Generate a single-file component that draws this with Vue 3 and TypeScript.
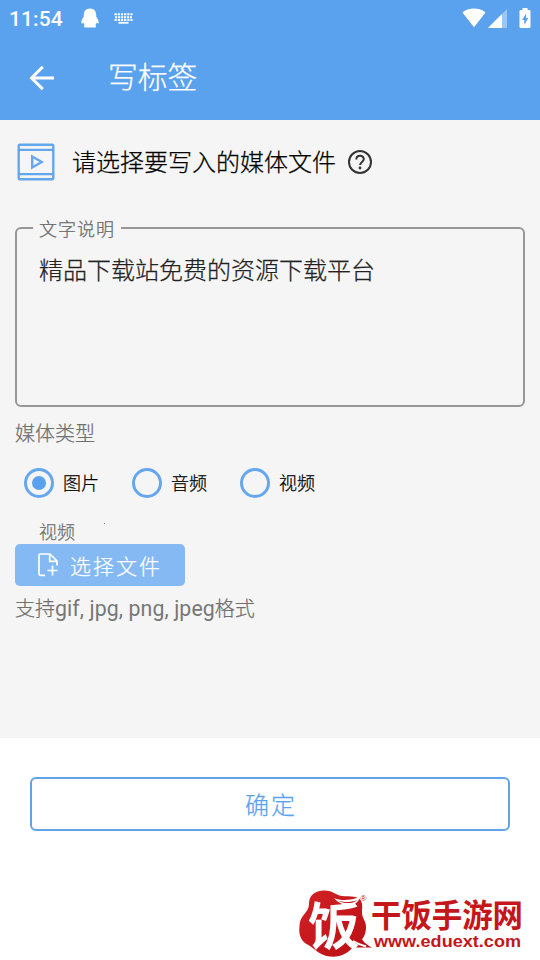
<script setup lang="ts">
import { ref } from 'vue'

interface MediaOption {
  value: string
  label: string
}

const mediaOptions: MediaOption[] = [
  { value: 'image', label: '图片' },
  { value: 'audio', label: '音频' },
  { value: 'video', label: '视频' },
]
const selected = ref<string>('image')
const description = ref<string>('精品下载站免费的资源下载平台')
</script>

<template>
  <div class="screen" lang="zh-CN">
    <header class="top">
      <div class="status">
        <span class="clock">11:54</span>
        <svg class="penguin" width="18" height="20" viewBox="0 0 18 20" fill="#fff">
          <path d="M9 0.5C5 0.5 2.800 3.300 2.800 7v1.800C1.600 10.600 0.300 12.500 0.300 14.600c0 1.500 .8 1.500 2 0 .3 1.100 .8 2 1.400 2.700C2.600 17.900 2.400 19.600 4.300 19.600h9.400c1.900 0 1.700-1.700 .6-2.300.6-.7 1.100-1.600 1.400-2.700 1.200 1.500 2 1.500 2 0 0-2.100-1.300-4-2.500-5.800V7C15.200 3.300 13 .5 9 .5z" />
        </svg>
        <svg class="keyboard" width="19" height="11" viewBox="0 0 19 11">
          <g stroke="#fff" stroke-width="2" fill="none">
            <path d="M0.500 1.300h18" stroke-dasharray="2.200 1" />
            <path d="M1 4.200h17" stroke-dasharray="2.200 .8" />
            <path d="M0.500 7h18" stroke-dasharray="2.200 1" />
            <path d="M4.500 9.800h10" stroke-width="1.800" />
          </g>
        </svg>
        <span class="grow"></span>
        <svg width="24" height="20" viewBox="0 0 24 20">
          <path d="M12 19.200L1 5.200C0.600 4.600 .7 4.200 1.300 3.800 7.400-.5 16.600-.5 22.700 3.800c.6.4.7.8.3 1.400z" fill="#fff" />
        </svg>
        <svg class="signal" width="19" height="19" viewBox="0 0 19 19">
          <path d="M19 0v19H0z" fill="#fff" fill-opacity=".4" />
          <path d="M14 5v14H0z" fill="#fff" />
        </svg>
        <svg class="battery" width="12" height="20" viewBox="0 0 12 20">
          <path d="M3.500 0h5v2H10.500a1 1 0 0 1 1 1v16a1 1 0 0 1-1 1h-9a1 1 0 0 1-1-1V3a1 1 0 0 1 1-1h2z" fill="#fff" />
          <path d="M7.200 5.500L3 12h2.300v5L9.300 10H7z" fill="#5ba2ee" />
        </svg>
      </div>
      <div class="toolbar">
        <svg class="back" width="26" height="26" viewBox="0 0 26 26" fill="none" stroke="#fff" stroke-width="2.900">
          <path d="M25 13H3M13.800 1.900L2.500 13l11.300 11.100" />
        </svg>
        <h1>写标签</h1>
      </div>
    </header>

    <main class="content">
      <div class="heading">
        <svg class="media" width="38" height="38" viewBox="0 0 38 38" fill="none" stroke="#65a7ee" stroke-width="2.400">
          <rect x="1.700" y="1.700" width="34.600" height="34.600" rx="1" />
          <path d="M1.700 6.900h34.600M1.700 31.100h34.600M15.200 13.500v11l9.500-5.500z" />
        </svg>
        <h2>请选择要写入的媒体文件</h2>
        <svg class="help" width="26" height="26" viewBox="0 0 26 26" fill="none" stroke="#333">
          <circle cx="13" cy="13" r="11" stroke-width="2" />
          <path d="M9.300 10.500C9.300 5.600 16.800 5.700 16.800 10.100c0 2.700-3.700 3-3.700 6" stroke-width="2" />
          <circle cx="13" cy="19" r="1.400" fill="#333" stroke="none" />
        </svg>
      </div>

      <fieldset class="field">
        <legend>文字说明</legend>
        <p>{{ description }}</p>
      </fieldset>

      <div class="type-title">媒体类型</div>
      <div class="radios">
        <label v-for="option in mediaOptions" :key="option.value" class="option" @click="selected = option.value">
          <span class="ring" :class="{ checked: selected === option.value }"></span>
          <span class="option-label">{{ option.label }}</span>
        </label>
      </div>

      <div class="sub"><span>视频</span><i class="speck"></i></div>
      <button class="choose">
        <svg width="22" height="24" viewBox="0 0 22 24" fill="none" stroke="#fff" stroke-width="1.700">
          <path d="M8 22.300H3.500a1.500 1.500 0 0 1-1.500-1.500V2.500A1.500 1.500 0 0 1 3.500 1h9.500l7 7v4.500M12.700 1v7.300H20M15.500 12.500v10M10.500 17.500h10" />
        </svg>
        <span>选择文件</span>
      </button>
      <div class="hint">支持<span class="formats">gif, jpg, png, jpeg</span>格式</div>
    </main>

    <footer class="bottom">
      <button class="confirm">确定</button>
      <svg class="brand" width="240" height="76" viewBox="0 0 240 76">
        <defs>
          <linearGradient id="seal" x1="0" y1="0" x2="1" y2="1">
            <stop offset="0" stop-color="#d22125" />
            <stop offset="1" stop-color="#b90f14" />
          </linearGradient>
        </defs>
        <path d="M23 6.500C14 7 9 12 9 20c0 9-9.500 11-9.500 22-1 8 1 14 7 18 8 4 12 11 23 12.500 11 1 18-3 23-9l19.500 0c-4-2-7-4-10-8 3-4 4-8 4-12.500 0-6-4-9-4-14 0-5 1-9-1.500-13-3-5-15-3-21-4.500-5-2-9-5.500-16.500-5z" fill="url(#seal)" />
        <text class="seal-word" x="8" y="61" textLength="52" lengthAdjust="spacingAndGlyphs">饭</text>
        <path d="M34 14c8 3.500 17 2 26-1-1.500 5-5 8-11 9-5-1-11-3-15-8z" fill="#fff" />
        <path d="M38 16.500c6 2.200 13 1.800 19-.3-4 3.600-13 4-19 .3z" fill="#c4161b" />
        <path d="M53 57c4 2.500 8 4 13 5.500" fill="none" stroke="#fff" stroke-width="2" />
        <text class="mark" x="60.500" y="17">®</text>
        <text class="name" x="71" y="43" textLength="152" lengthAdjust="spacingAndGlyphs">干饭手游网</text>
        <text class="site" x="74" y="62.700" textLength="147" lengthAdjust="spacingAndGlyphs">www.eduext.com</text>
      </svg>
    </footer>
  </div>
</template>

<style>
body {
  margin: 0;
  background: #fff;
}
</style>

<style scoped>
.screen {
  width: 540px;
  height: 960px;
  display: flex;
  flex-direction: column;
  overflow: hidden;
  font-family: Roboto, "Noto Sans CJK SC", sans-serif;
  font-weight: 300;
  color: #111;
}
.screen * {
  box-sizing: border-box;
}
svg {
  display: block;
  flex: none;
}
button {
  font-family: inherit;
  font-weight: inherit;
  margin: 0;
}
h1,
h2,
.content,
.confirm {
  -webkit-text-stroke-width: 0.250px;
}
.top {
  height: 120px;
  flex: none;
  background: #5ba2ee;
  color: #fff;
}
.status {
  height: 36px;
  display: flex;
  align-items: center;
  padding: 0 9px 0 9px;
}
.clock {
  width: 54px;
  font-size: 21px;
  font-weight: 500;
  letter-spacing: 0.1px;
  line-height: 36px;
  padding-top: 1px;
  white-space: nowrap;
}
.penguin {
  margin-left: 18px;
}
.keyboard {
  margin-left: 15px;
}
.grow {
  flex: 1;
}
.signal {
  margin-left: 2px;
}
.battery {
  margin-left: 12px;
}
.toolbar {
  height: 84px;
  display: flex;
  align-items: center;
  padding-left: 29px;
}
h1 {
  margin: 0 0 0 53px;
  padding-top: 2px;
  font-size: 29.800px;
  font-weight: 300;
  line-height: 80px;
  padding-bottom: 2px;
}
.content {
  height: 618px;
  flex: none;
  padding: 0 15px;
  background: #f5f5f5;
}
.heading {
  height: 84px;
  display: flex;
  align-items: center;
}
.media {
  margin-left: 2px;
}
h2 {
  margin: 0 0 0 17px;
  padding-top: 2px;
  font-size: 24px;
  font-weight: inherit;
  line-height: 36px;
  color: #000;
}
.help {
  margin-left: 11px;
}
.field {
  margin: 10px 0 0;
  height: 193px;
  padding: 0 22px;
  border: 2px solid #979797;
  border-radius: 6px;
  min-width: 0;
}
legend {
  height: 28px;
  margin-left: -6px;
  padding: 0 6px;
  font-size: 18px;
  letter-spacing: 1px;
  line-height: 32px;
  color: #6a6a6a;
}
.field p {
  margin: 9px 0 0;
  font-size: 24px;
  line-height: 40px;
  color: #222;
}
.type-title {
  height: 52px;
  font-size: 20px;
  line-height: 54px;
  color: #707070;
}
.radios {
  height: 48px;
  display: flex;
  padding-left: 9px;
}
.option {
  width: 108px;
  display: flex;
  align-items: center;
  gap: 9px;
  font-size: 18px;
  color: #000;
}
.option-label {
  padding-bottom: 2px;
}
.ring {
  width: 30px;
  height: 30px;
  display: grid;
  place-items: center;
  border: 3px solid #65a7ee;
  border-radius: 50%;
}
.ring.checked::after {
  content: "";
  width: 14px;
  height: 14px;
  border-radius: 50%;
  background: #5ba2ee;
}
.sub {
  height: 37px;
  display: flex;
  padding: 12px 0 0 24px;
  font-size: 18px;
  line-height: 28px;
  color: #707070;
}
.speck {
  width: 1px;
  height: 1px;
  margin: 4px 0 0 29px;
  background: #777;
}
.choose {
  width: 170px;
  height: 42px;
  display: flex;
  align-items: center;
  gap: 11px;
  padding: 0 0 0 22px;
  border: 0;
  border-radius: 5px;
  background: #84b9f4;
  color: #fff;
  font-size: 21px;
  letter-spacing: 2px;
  white-space: nowrap;
}
.choose span {
  padding-bottom: 1px;
}
.hint {
  height: 44px;
  font-size: 20px;
  line-height: 46px;
  color: #707070;
  white-space: nowrap;
}
.formats {
  font-size: 21.300px;
  font-weight: 400;
  letter-spacing: 0.100px;
  -webkit-text-stroke-width: 0;
  color: #777;
}
.bottom {
  height: 222px;
  display: flex;
  flex-direction: column;
  padding: 39px 0 0 30px;
  background: #fff;
}
.confirm {
  width: 480px;
  height: 54px;
  padding: 0 0 2px 2px;
  border: 2px solid #62a3e7;
  border-radius: 6px;
  background: #fff;
  color: #5ba2ee;
  font-size: 24px;
  letter-spacing: 2px;
}
.brand {
  margin: 53px 0 0 270px;
  overflow: visible;
}
.brand text {
  font-family: "Noto Sans CJK SC", sans-serif;
  font-weight: 700;
}
.brand .seal-word {
  font-size: 51px;
  fill: #fff;
}
.brand .mark {
  font-family: "Liberation Sans", sans-serif;
  font-size: 8px;
  font-weight: 400;
  fill: #c4161b;
}
.brand .name {
  font-size: 32px;
  fill: #c4161b;
}
.brand .site {
  font-family: "Liberation Sans", sans-serif;
  font-size: 17px;
  fill: #c4161b;
}
</style>
